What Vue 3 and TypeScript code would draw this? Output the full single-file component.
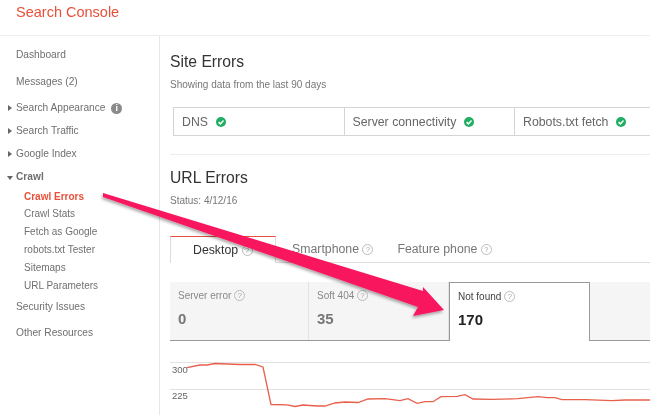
<script setup lang="ts">
const navTop = [
  { label: 'Dashboard', cls: 'h-a' },
  { label: 'Messages (2)', cls: 'h-b' },
]
const navGroups = ['Search Traffic', 'Google Index']
const crawlLinks = ['Crawl Stats', 'Fetch as Google', 'robots.txt Tester', 'Sitemaps', 'URL Parameters']
const siteChecks = ['DNS', 'Server connectivity', 'Robots.txt fetch']
const tabs = ['Smartphone', 'Feature phone']
const stats = [
  { label: 'Server error', value: '0' },
  { label: 'Soft 404', value: '35' },
]

const chartPoints = [
  [17, 162.7], [30, 160], [37, 160], [45, 158.5], [57, 159], [70, 159.5], [85, 159.5], [93, 162], [101, 199.5],
  [117, 199.8], [125, 201.5], [133, 200], [147, 201], [155, 201], [165, 198], [175, 197], [188, 197.5], [198, 194],
  [215, 193.7], [230, 195.7], [238, 193.7], [247, 198.3], [255, 196.7], [263, 196.7], [271, 191.7], [287, 191.3],
  [295, 189.7], [303, 194], [322, 194.3], [348, 193.7], [368, 191.7], [377, 192.7], [385, 192.7], [392, 194.7],
  [415, 194.7], [442, 195.7], [455, 195], [480, 195],
]
const chartPath = chartPoints.map(([x, y]) => `${x},${y}`).join(' ')
</script>

<template>
  <div class="page">
    <header class="topbar">Search Console</header>
    <div class="body">
      <nav class="side">
        <a v-for="n in navTop" :key="n.label" class="nav" :class="n.cls">{{ n.label }}</a>
        <a class="nav group h-c">
          <i class="caret"></i>Search Appearance
          <span class="info">i</span>
        </a>
        <a v-for="g in navGroups" :key="g" class="nav group h-d"><i class="caret"></i>{{ g }}</a>
        <a class="nav group open"><i class="caret down"></i>Crawl</a>
        <a class="sub current">Crawl Errors</a>
        <a v-for="l in crawlLinks" :key="l" class="sub">{{ l }}</a>
        <a class="nav h-e">Security Issues</a>
        <a class="nav h-f">Other Resources</a>
      </nav>

      <main class="main">
        <h2 class="title first">Site Errors</h2>
        <p class="note">Showing data from the last 90 days</p>
        <div class="checks">
          <div v-for="c in siteChecks" :key="c" class="check">
            {{ c }}
            <svg class="ok" viewBox="0 0 10 10" width="10" height="10">
              <circle cx="5" cy="5" r="5" fill="#1fae62" />
              <path d="M2.6 5.1 4.4 6.9 7.5 3.6" fill="none" stroke="#fff" stroke-width="1.5" />
            </svg>
          </div>
        </div>
        <hr class="rule" />
        <h2 class="title">URL Errors</h2>
        <p class="note">Status: 4/12/16</p>

        <div class="tabs">
          <div class="tab active">Desktop <span class="help">?</span></div>
          <div v-for="t in tabs" :key="t" class="tab">{{ t }} <span class="help">?</span></div>
        </div>

        <div class="stats">
          <div v-for="s in stats" :key="s.label" class="stat">
            <div class="stat-label">{{ s.label }} <span class="help">?</span></div>
            <div class="stat-value">{{ s.value }}</div>
          </div>
          <div class="stat selected">
            <div class="stat-label">Not found <span class="help">?</span></div>
            <div class="stat-value">170</div>
          </div>
        </div>

        <div class="chart">
          <svg width="480" height="65" viewBox="0 145 480 65" class="plot">
            <line x1="0" y1="157.5" x2="480" y2="157.5" stroke="#e2e2e2" />
            <line x1="0" y1="184.5" x2="480" y2="184.5" stroke="#e2e2e2" />
            <polyline :points="chartPath" fill="none" stroke="#e8604c" stroke-width="1.3" />
          </svg>
          <span class="tick t1">300</span>
          <span class="tick t2">225</span>
        </div>
      </main>
    </div>

    <svg class="arrow" width="650" height="415" viewBox="0 0 650 415">
      <defs>
        <filter id="arrow-shadow" x="-5%" y="-5%" width="110%" height="115%">
          <feDropShadow dx="-1" dy="2" stdDeviation="1.5" flood-color="#000" flood-opacity="0.35" />
        </filter>
      </defs>
      <polygon
        points="103,193 423,291 423,287 444,310 413,316 418,307 103,197"
        fill="#f8155f"
        filter="url(#arrow-shadow)"
      />
    </svg>
  </div>
</template>

<style>
html,
body {
  margin: 0;
  background: #fff;
}
</style>

<style scoped>
.page {
  position: relative;
  width: 650px;
  height: 415px;
  overflow: hidden;
  font-family: "Liberation Sans", Arial, sans-serif;
  color: #6f6f6f;
  background: #fff;
  filter: blur(0.35px);
}
.topbar {
  height: 36px;
  box-sizing: border-box;
  padding: 3px 0 0 16px;
  font-size: 14.5px;
  line-height: 18px;
  color: #e8503a;
  border-bottom: 1px solid #eee;
}
.body {
  display: flex;
  height: 379px;
}
.side {
  width: 160px;
  flex: none;
  box-sizing: border-box;
  padding-top: 9px;
  border-right: 1px solid #e6e6e6;
  font-size: 10.2px;
}
.nav {
  display: block;
  position: relative;
  padding-left: 16px;
  line-height: 20px;
}
.h-a { height: 27px; }
.h-b { height: 26px; }
.h-c { height: 23px; }
.h-d { height: 23px; }
.open {
  height: 22px;
  font-weight: bold;
}
.h-e { height: 26px; margin-top: 2px; }
.h-f { height: 26px; }
.caret {
  position: absolute;
  left: 8px;
  top: 7px;
  border-left: 4px solid #666;
  border-top: 3px solid transparent;
  border-bottom: 3px solid transparent;
}
.caret.down {
  left: 7px;
  top: 9px;
  border-top: 4px solid #666;
  border-left: 3px solid transparent;
  border-right: 3px solid transparent;
  border-bottom: 0;
}
.info {
  display: inline-block;
  width: 11px;
  height: 11px;
  margin-left: 3px;
  border-radius: 50%;
  background: #8a8a8a;
  color: #fff;
  font-size: 9px;
  font-weight: bold;
  line-height: 11px;
  text-align: center;
}
.sub {
  display: block;
  height: 18px;
  padding-left: 24px;
  font-size: 10px;
  line-height: 18px;
}
.current {
  height: 16px;
  color: #e8503a;
  font-weight: bold;
  line-height: 16px;
}
.main {
  flex: 1;
  min-width: 0;
  padding-left: 10px;
}
.title {
  margin: 0;
  font-size: 15.7px;
  font-weight: normal;
  line-height: 20px;
  color: #333;
}
.first {
  margin-top: 16px;
}
.note {
  margin: 6px 0 0;
  font-size: 10px;
  line-height: 14px;
  color: #777;
}
.checks {
  display: flex;
  width: 500px;
  height: 29px;
  box-sizing: border-box;
  margin: 15px 0 0 3px;
  border: 1px solid #d4d4d4;
}
.check {
  display: flex;
  flex: none;
  align-items: center;
  gap: 8px;
  width: 170.5px;
  box-sizing: border-box;
  padding-left: 8px;
  border-right: 1px solid #d4d4d4;
  font-size: 12.3px;
  color: #666;
}
.check:last-child {
  border-right: 0;
}
.ok {
  flex: none;
}
.rule {
  margin: 18px 0 13px;
  border: 0;
  border-top: 1px solid #eee;
}
.tabs {
  display: flex;
  height: 27px;
  box-sizing: border-box;
  margin-top: 28px;
  border-bottom: 1px solid #ddd;
}
.tab {
  padding: 0 8px 0 16px;
  font-size: 12.3px;
  line-height: 26px;
  color: #777;
  white-space: nowrap;
}
.active {
  width: 106px;
  height: 27px;
  box-sizing: border-box;
  padding: 0 0 0 22px;
  color: #333;
  background: #fff;
  border-top: 1px solid #e8503a;
  border-left: 1px solid #ddd;
  border-right: 1px solid #ddd;
}
.help {
  display: inline-block;
  width: 9px;
  height: 9px;
  border: 1px solid #bbb;
  border-radius: 50%;
  color: #aaa;
  font-size: 8px;
  line-height: 9px;
  text-align: center;
  vertical-align: 1px;
}
.stats {
  display: flex;
  height: 59px;
  box-sizing: border-box;
  margin-top: 19px;
  background: #f5f5f5;
  border-bottom: 1px solid #999;
}
.stat {
  width: 140px;
  box-sizing: border-box;
  padding: 7px 0 0 8px;
  border-right: 1px solid #e2e2e2;
}
.stat:first-child {
  width: 139px;
}
.stat-label {
  font-size: 10px;
  line-height: 14px;
  color: #888;
}
.stat-value {
  margin-top: 7px;
  font-size: 15px;
  font-weight: bold;
  line-height: 18px;
  color: #777;
}
.selected {
  width: 141px;
  height: 59px;
  background: #fff;
  border: 1px solid #999;
  border-bottom: 0;
}
.selected .stat-label {
  color: #444;
}
.selected .stat-value {
  color: #222;
}
.chart {
  position: relative;
}
.plot {
  display: block;
  padding-top: 9px;
}
.tick {
  position: absolute;
  left: 2px;
  font-size: 9.5px;
  line-height: 12px;
  color: #666;
}
.t1 { top: 23px; }
.t2 { top: 49px; }
.arrow {
  position: absolute;
  top: 0;
  left: 0;
  pointer-events: none;
}
</style>
